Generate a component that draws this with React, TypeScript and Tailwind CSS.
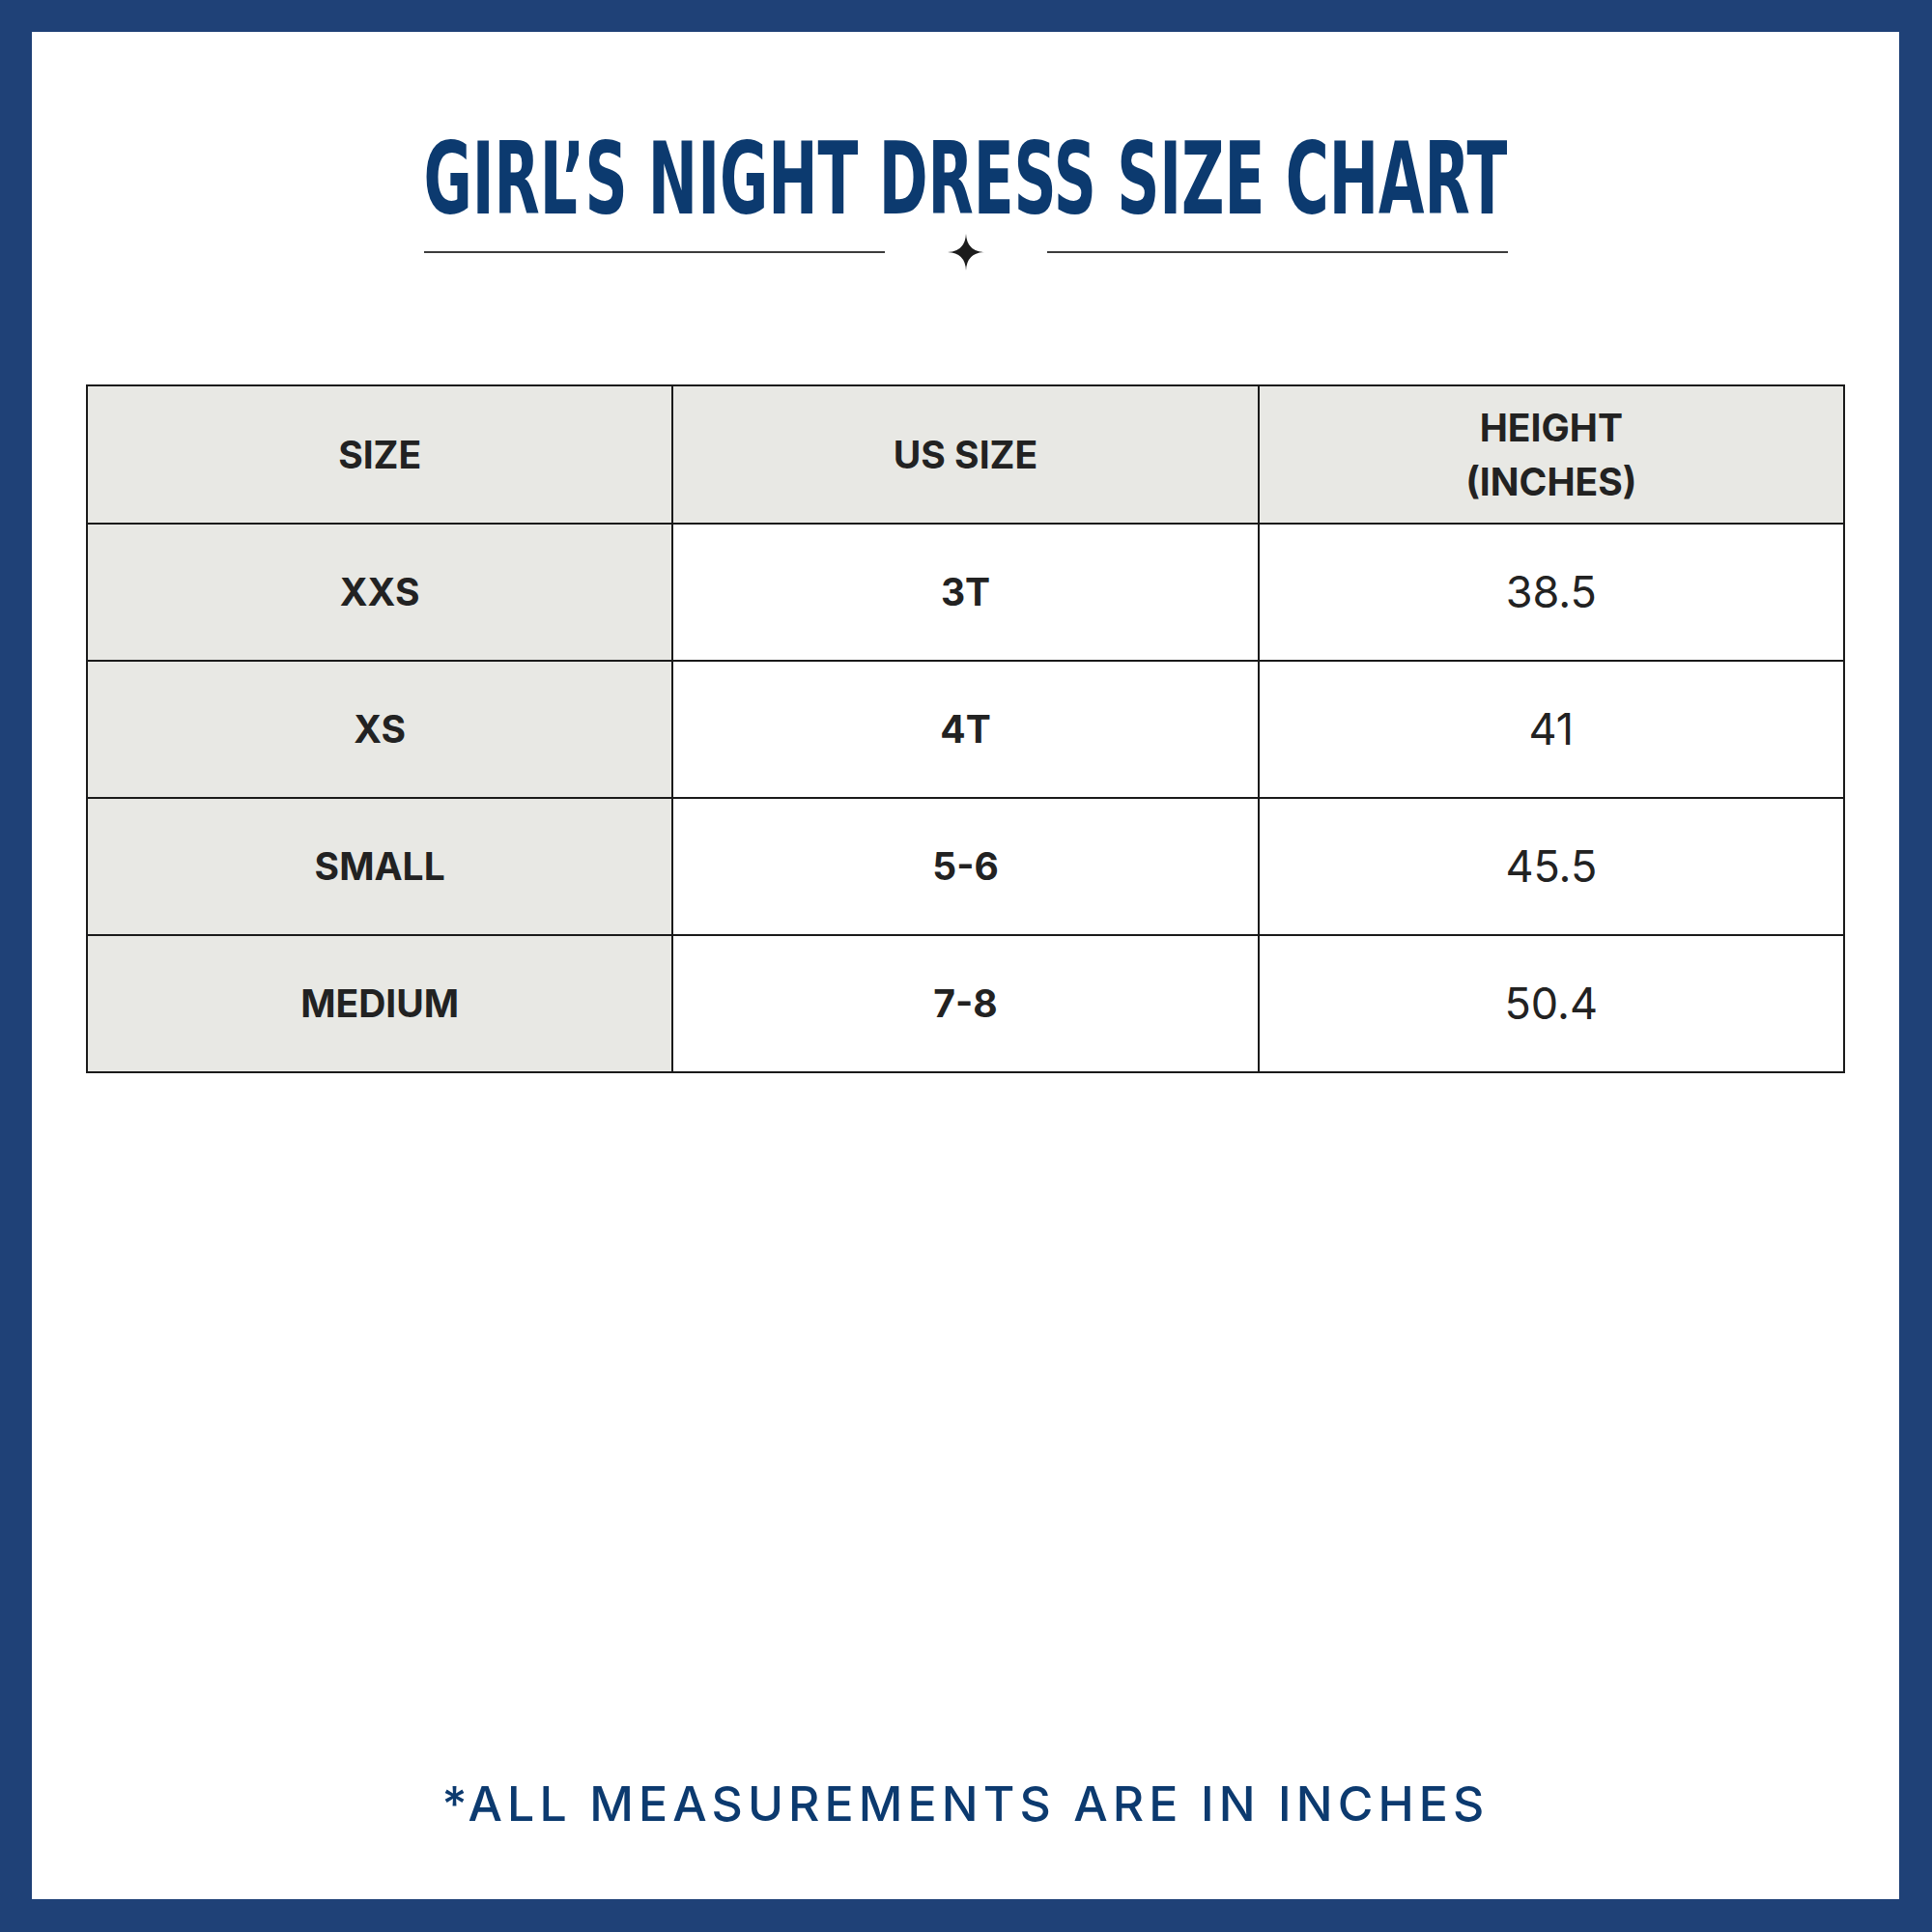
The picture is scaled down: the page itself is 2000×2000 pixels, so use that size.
import React from 'react';

const rows = [
  { size: 'XXS', us: '3T', height: '38.5' },
  { size: 'XS', us: '4T', height: '41' },
  { size: 'SMALL', us: '5-6', height: '45.5' },
  { size: 'MEDIUM', us: '7-8', height: '50.4' },
];

const Sparkle = () => (
  <svg width="38" height="38" viewBox="0 0 38 38" className="text-[#1c1c1c]">
    <path
      d="M19 0 Q19.8 18.2 38 19 Q19.8 19.8 19 38 Q18.2 19.8 0 19 Q18.2 18.2 19 0Z"
      fill="currentColor"
    />
  </svg>
);

const App = () => {
  return (
    <div className="w-[2000px] h-[2000px] bg-[#1f4177] pt-[33px] pl-[33px] pr-[34px] pb-[34px]">
      <div className="bg-white h-full flex flex-col items-center font-['Inter',sans-serif]">
        {/* title */}
        <div className="pt-[100px] flex flex-col items-center">
          <h1 className="font-['Liberation_Sans_Narrow','DejaVu_Sans_Condensed',sans-serif] font-bold text-[104px] leading-none text-[#0c3a6f] scale-x-[0.655] whitespace-nowrap">
            GIRL’S NIGHT DRESS SIZE CHART
          </h1>
          <div className="mt-[5px] flex items-center w-[1122px]">
            <div className="flex-1 h-[2px] bg-[#3c3c3c]" />
            <div className="w-[168px] flex justify-center">
              <Sparkle />
            </div>
            <div className="flex-1 h-[2px] bg-[#3c3c3c]" />
          </div>
        </div>

        {/* table */}
        <table className="mt-[118px] w-[1821px] table-fixed border-collapse border-2 border-[#1a1a1a] text-[#222222]">
          <thead>
            <tr className="h-[143px] bg-[#e8e8e4]">
              <th className="border-2 border-[#1a1a1a] font-bold text-[39px] leading-[56px]">SIZE</th>
              <th className="border-2 border-[#1a1a1a] font-bold text-[39px] leading-[56px]">US SIZE</th>
              <th className="border-2 border-[#1a1a1a] font-bold text-[39px] leading-[56px]">
                HEIGHT
                <br />
                (INCHES)
              </th>
            </tr>
          </thead>
          <tbody>
            {rows.map(row => (
              <tr key={row.size} className="h-[142px]">
                <td className="border-2 border-[#1a1a1a] bg-[#e8e8e4] text-center font-bold text-[39px]">
                  {row.size}
                </td>
                <td className="border-2 border-[#1a1a1a] text-center font-bold text-[39px]">
                  {row.us}
                </td>
                <td className="border-2 border-[#1a1a1a] text-center text-[45px]">
                  {row.height}
                </td>
              </tr>
            ))}
          </tbody>
        </table>

        {/* footer note */}
        <p className="mt-auto mb-[61px] font-medium text-[50px] tracking-[5.1px] text-[#0c3a6f]">
          *ALL MEASUREMENTS ARE IN INCHES
        </p>
      </div>
    </div>
  );
};

export default App;
